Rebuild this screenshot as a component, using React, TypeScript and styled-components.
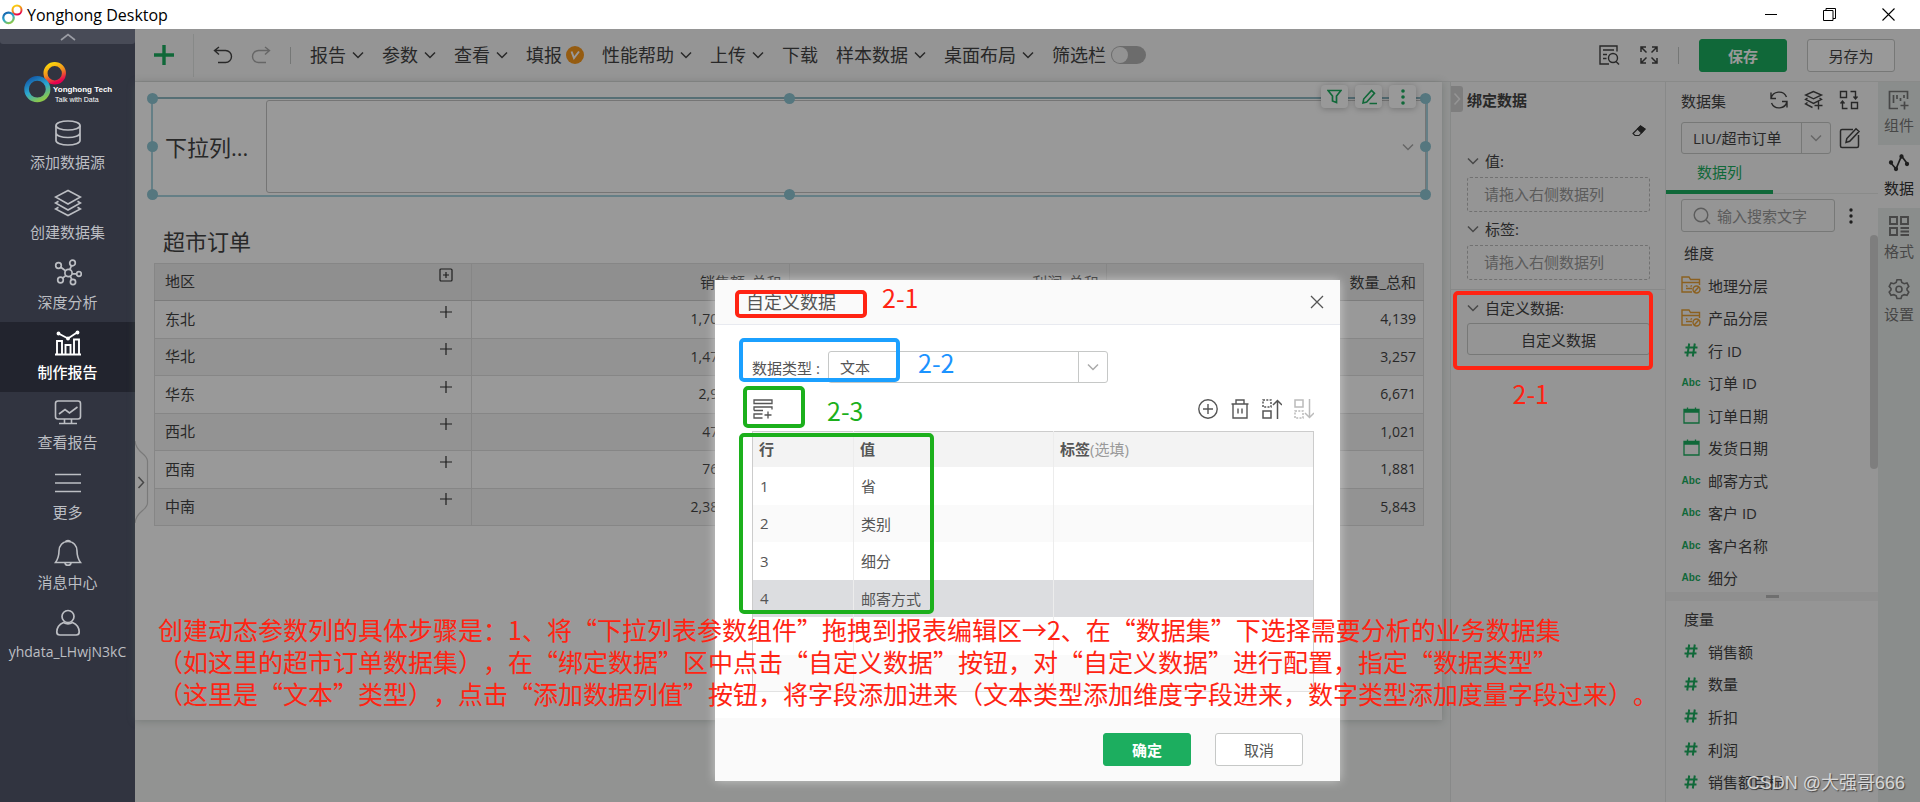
import React from "react";
import styled, { createGlobalStyle, css } from "styled-components";

const GlobalStyle = createGlobalStyle`
  * { box-sizing: border-box; }
  html, body, #root { height: 100%; }
  body {
    margin: 0;
    overflow: hidden;
    font-family: "Open Sans", "Noto Sans CJK SC", sans-serif;
    font-size: 15px;
    color: #444;
    background: #f4f6f5;
  }
  button, input, select { font: inherit; color: inherit; }
  button { cursor: pointer; padding: 0; }
  ul { list-style: none; margin: 0; padding: 0; }
  svg { display: block; flex: none; }
`;

/* ---------- icons ---------- */

type IconProps = {
  w?: number;
  h?: number;
  box?: string;
  sw?: number;
  color?: string;
  children: React.ReactNode;
};

function Icon({ w = 20, h = 20, box, sw = 1.4, color = "currentColor", children }: IconProps) {
  return (
    <svg
      width={w}
      height={h}
      viewBox={box ?? `0 0 ${w} ${h}`}
      fill="none"
      stroke={color}
      strokeWidth={sw}
      aria-hidden="true"
    >
      {children}
    </svg>
  );
}

const Chevron = ({ color, sw = 1.5 }: { color?: string; sw?: number }) => (
  <Icon w={12} h={8} sw={sw} color={color}>
    <path d="M1 1.5l5 5 5-5" />
  </Icon>
);

const DatabaseIcon = () => (
  <Icon w={28} h={28} sw={1.7}>
    <ellipse cx="14" cy="6.5" rx="12" ry="4.5" />
    <path d="M2 6.5v15c0 2.500 5.400 4.500 12 4.500s12-2 12-4.500v-15M2 14c0 2.500 5.400 4.500 12 4.500s12-2 12-4.500" />
  </Icon>
);
const LayersIcon = () => (
  <Icon w={28} h={28} sw={1.6}>
    <path d="M14 1.500L1.500 8 14 15l12.500-7zM4.500 12.200L1.500 14 14 21l12.500-7-3-1.800M4.500 18.200L1.500 20 14 26.500 26.500 20l-3-1.800" />
  </Icon>
);
const NetworkIcon = () => (
  <Icon w={28} h={28} sw={1.7}>
    <circle cx="14.500" cy="14" r="3.600" />
    <circle cx="4.500" cy="6.500" r="2.800" />
    <circle cx="18.500" cy="4" r="2.800" />
    <circle cx="25" cy="15" r="2.300" />
    <circle cx="6.500" cy="21" r="2.800" />
    <circle cx="19" cy="23" r="2.600" />
    <path d="M6.800 8.200l4.700 3.500M17.500 6.700l-1.700 3.900M22.600 14.800h-4.500M8.700 19.200l3-2.600M17.900 20.600l-1.700-3.400" />
  </Icon>
);
const ReportIcon = () => (
  <Icon w={28} h={28} sw={1.9}>
    <path d="M1 25.500h26M3 25.500V12h5v13.500M11.500 25.500V16h5v9.500M20 25.500V10.500h5v15M4.500 4.500l9.500 5 9-6" />
    <circle cx="4.500" cy="4.500" r="1" fill="currentColor" />
    <circle cx="14" cy="9.500" r="1" fill="currentColor" />
    <circle cx="23.500" cy="3.500" r="1" fill="currentColor" />
  </Icon>
);
const MonitorIcon = () => (
  <Icon w={28} h={28} sw={1.6}>
    <rect x="1.500" y="2" width="25" height="18" rx="2.500" />
    <path d="M5 15l6-4.500 4.500 3.500 8-6M10.500 20v4M17.500 20v4M5 24.500h18" />
  </Icon>
);
const MenuIcon = () => (
  <Icon w={28} h={28} sw={1.6}>
    <path d="M1 5.500h26M1 14h26M1 22.500h26" />
  </Icon>
);
const BellIcon = () => (
  <Icon w={28} h={28} sw={1.6}>
    <path d="M14 2.500c-5.500 0-9 4-9 9.500 0 6-1 8-3.500 11.500h25C24 20 23 18 23 12c0-5.500-3.500-9.500-9-9.500zM11.500 2.800c.5-1.800 4.500-1.800 5 0M11 24c.5 3 5.500 3 6 0" />
  </Icon>
);
const UserIcon = () => (
  <Icon w={28} h={28} sw={1.7}>
    <circle cx="14" cy="7.500" r="6" />
    <path d="M9.500 13.500C5 15.500 2.800 19 2.800 23c0 2 1 3 3 3h16.400c2 0 3-1 3-3 0-4-2.200-7.500-6.700-9.500-2.500 1.500-6.500 1.500-9 0z" />
  </Icon>
);

function Rings({ size }: { size: number }) {
  const id = `ring${size}`;
  return (
    <svg width={size} height={size} viewBox="0 0 42 42" fill="none" aria-hidden="true">
      <defs>
        <linearGradient id={`${id}a`} x1="0.2" y1="0" x2="0.7" y2="1">
          <stop offset="0" stopColor="#1560ac" />
          <stop offset="0.5" stopColor="#2ba7cf" />
          <stop offset="1" stopColor="#8cc84b" />
        </linearGradient>
        <linearGradient id={`${id}b`} x1="0.2" y1="0" x2="0.6" y2="1">
          <stop offset="0" stopColor="#fbd50c" />
          <stop offset="0.5" stopColor="#f08c1e" />
          <stop offset="1" stopColor="#e5004f" />
        </linearGradient>
      </defs>
      <circle cx="30" cy="12" r="9" stroke={`url(#${id}b)`} strokeWidth="4" />
      <circle cx="13" cy="27.500" r="10.500" stroke={`url(#${id}a)`} strokeWidth="4.500" />
    </svg>
  );
}

/* ---------- page frame ---------- */

const Page = styled.div`
  position: relative;
  display: flex;
  flex-direction: column;
  height: 100vh;
  overflow: hidden;
`;

const TitleBar = styled.header`
  display: flex;
  align-items: center;
  height: 29px;
  flex: none;
  background: #fff;
  color: #000;
`;
const AppName = styled.h1`
  display: flex;
  align-items: center;
  gap: 4px;
  margin: 0;
  padding-left: 2px;
  font-size: 16px;
  line-height: 28px;
  font-weight: 400;
`;
const WindowButtons = styled.div`
  display: flex;
  margin-left: auto;
  padding-right: 2px;
`;
const WindowButton = styled.button`
  display: grid;
  place-items: center;
  width: 59px;
  height: 29px;
  border: 0;
  background: none;
`;

const Body = styled.div`
  display: flex;
  flex: 1;
  min-height: 0;
`;

/* ---------- sidebar ---------- */

const Sidebar = styled.nav`
  display: flex;
  flex-direction: column;
  flex: none;
  width: 135px;
  background: #313440;
  color: #bcbec3;
`;
const SidebarCollapse = styled.button`
  display: grid;
  place-items: center;
  height: 15px;
  border: 0;
  border-radius: 0 0 3px 3px;
  background: #484b57;
  color: #9b9da5;
`;
const Brand = styled.div`
  display: flex;
  align-items: flex-end;
  height: 68px;
  padding: 0 0 8px 24px;
  color: #fff;
`;
const BrandText = styled.div`
  margin-left: -14px;
  font-family: "Liberation Sans", sans-serif;
  white-space: nowrap;
  strong { display: block; font-size: 8px; line-height: 10px; }
  span { display: block; padding-left: 2px; font-size: 7px; line-height: 9px; }
`;
const NavItem = styled.a<{ $active?: boolean; $user?: boolean }>`
  display: flex;
  flex-direction: column;
  align-items: center;
  gap: 4px;
  height: 70px;
  padding-top: 7px;
  color: ${(p) => (p.$active ? "#fff" : "inherit")};
  background: ${(p) => (p.$active ? "#22242e" : "none")};
  font-size: ${(p) => (p.$user ? 14 : 15)}px;
  font-weight: ${(p) => (p.$active ? 500 : 400)};
  line-height: 22px;
  text-decoration: none;
`;

const Main = styled.main`
  position: relative;
  display: flex;
  flex-direction: column;
  flex: 1;
  min-width: 0;
`;

/* ---------- toolbar ---------- */

const Toolbar = styled.div`
  display: flex;
  align-items: center;
  flex: none;
  height: 53px;
  padding-right: 25px;
  border-bottom: 1px solid #e4e6e5;
  background: #f8f8f8;
`;
const AddButton = styled.button`
  display: grid;
  place-items: center;
  width: 59px;
  height: 43px;
  border: 0;
  border-right: 1px solid #e2e4e3;
  background: none;
`;
const IconButton = styled.button<{ $color?: string }>`
  display: grid;
  place-items: center;
  border: 0;
  background: none;
  color: ${(p) => p.$color ?? "inherit"};
`;
const History = styled.div`
  display: flex;
  gap: 18px;
  margin: 0 19px;
`;
const Rule = styled.span`
  width: 1px;
  height: 17px;
  background: #c4c6c5;
`;
const Menus = styled.div`
  display: flex;
  align-items: center;
  gap: 18px;
  margin-left: 19px;
`;
const MenuButton = styled.button`
  display: flex;
  align-items: center;
  gap: 6px;
  border: 0;
  background: none;
  font-size: 18px;
  line-height: 26px;
  white-space: nowrap;
`;
const VipBadge = styled.span`
  display: grid;
  place-items: center;
  width: 18px;
  height: 18px;
  margin-left: -2px;
  border-radius: 50%;
  background: #f8991d;
`;
const SwitchLabel = styled.label`
  display: flex;
  align-items: center;
  gap: 5px;
  font-size: 18px;
  line-height: 26px;
  white-space: nowrap;
`;
const Switch = styled.input`
  appearance: none;
  width: 35px;
  height: 18px;
  margin: 0;
  padding: 1px;
  border-radius: 9px;
  background: #b4b4b4;
  &::before {
    content: "";
    display: block;
    width: 16px;
    height: 16px;
    border-radius: 50%;
    background: #f6f6f6;
  }
`;
const ToolbarEnd = styled.div`
  display: flex;
  align-items: center;
  gap: 20px;
  margin-left: auto;
`;
const Button = styled.button<{ $primary?: boolean }>`
  width: 88px;
  height: 33px;
  border: 1px solid #c6c8c7;
  border-radius: 3px;
  background: #fff;
  ${(p) =>
    p.$primary &&
    css`
      border-color: #1cae5f;
      background: #1cae5f;
      color: #fff;
      font-weight: 700;
    `}
`;

/* ---------- report canvas ---------- */

const Workspace = styled.div`
  display: flex;
  flex: 1;
  min-height: 0;
`;
const CanvasArea = styled.div`
  position: relative;
  flex: 1;
  min-width: 0;
  padding-right: 8px;
  background: #f3f5f4;
`;
const Sheet = styled.section`
  min-height: 638px;
  padding: 15px 14px 0 16px;
  background: #fff;
  box-shadow: 0 1px 8px rgba(90, 110, 100, 0.3);
`;
const SelectedWidget = styled.div`
  position: relative;
  display: flex;
  align-items: center;
  height: 100px;
  padding: 1px 0 2px 12px;
  border: 2px solid #a9d4df;
  border-top-color: #8fb9c4;
`;
const WidgetLabel = styled.label`
  width: 101px;
  font-size: 22px;
  line-height: 30px;
`;
const WidgetBox = styled.div`
  display: flex;
  align-items: center;
  flex: 1;
  height: 93px;
  padding-right: 11px;
  border: 1px solid #c4c4c4;
  border-radius: 3px;
  color: #aaa;
`;
const BareSelect = styled.select`
  appearance: none;
  flex: 1;
  min-width: 0;
  height: 100%;
  padding: 0 0 1px 11px;
  border: 0;
  background: none;
  outline: 0;
`;
const Handle = styled.i<{ $x: number; $y: number }>`
  position: absolute;
  left: ${(p) => p.$x}%;
  top: ${(p) => p.$y}%;
  width: 11px;
  height: 11px;
  margin: -6px;
  border-radius: 50%;
  background: #8ec6d4;
`;
const WidgetActions = styled.div`
  position: absolute;
  right: 10px;
  top: -14px;
  display: flex;
  gap: 7px;
`;
const WidgetAction = styled.button`
  display: grid;
  place-items: center;
  width: 27px;
  height: 23px;
  border: 0;
  border-radius: 4px;
  background: #fff;
  color: #1cae5f;
  box-shadow: 0 1px 6px rgba(0, 0, 0, 0.25);
`;
const ReportTitle = styled.h2`
  margin: 28px 0 6px 12px;
  font-size: 22px;
  line-height: 32px;
  font-weight: 400;
`;
const ReportTable = styled.table`
  width: calc(100% - 7px);
  margin-left: 3px;
  border-collapse: collapse;
  table-layout: fixed;
  th, td {
    height: 37px;
    padding: 0 7px 2px 10px;
    border: 1px solid #e0e0e0;
    font-weight: 400;
    text-align: right;
  }
  td { font-size: 14px; }
  th { border-bottom-color: #cfcfcf; background: #efefef; }
  th:first-child { text-align: left; }
  tbody th { border-bottom-color: #e0e0e0; background: none; }
  tbody tr:nth-child(odd) { height: 38px; }
  tbody tr:nth-child(even) { background: #f5f5f5; }
`;
const RegionCell = styled.div<{ $head?: boolean }>`
  display: flex;
  justify-content: space-between;
  padding-right: 11px;
  line-height: 24px;
  svg { margin-top: ${(p) => (p.$head ? "-1px" : "-2px")}; }
`;
const DrawerHandle = styled.button`
  position: absolute;
  left: 0;
  top: 358px;
  border: 0;
  background: none;
  color: #777;
`;

/* ---------- binding panel ---------- */

const BindPanel = styled.aside`
  flex: none;
  width: 215px;
  border-left: 1px solid #e3e5e4;
  background: #f8f8f8;
`;
const BindHead = styled.div`
  display: flex;
  align-items: center;
  gap: 4px;
  padding-top: 4px;
  font-weight: 700;
`;
const CollapseTab = styled.button`
  display: grid;
  place-items: center;
  width: 12px;
  height: 26px;
  border: 0;
  border-radius: 0 3px 3px 0;
  background: #d2d2d2;
  color: #f8f8f8;
`;
const EraserRow = styled.div`
  display: flex;
  justify-content: flex-end;
  align-items: flex-start;
  height: 35px;
  padding: 13px 19px 0 0;
`;
const BindSection = styled.section`
  padding: 0 15px 0 16px;
`;
const SectionTitle = styled.h3`
  display: flex;
  align-items: center;
  gap: 6px;
  height: 27px;
  margin: 0;
  font-size: 15px;
  font-weight: 400;
  svg { color: #777; }
`;
const DropZone = styled.div`
  height: 35px;
  margin: 3px 0;
  padding-left: 16px;
  border: 1px dashed #bcbcbc;
  border-radius: 3px;
  color: #999;
  line-height: 32px;
`;
const CustomSection = styled(BindSection)`
  margin-top: 9px;
  padding-top: 4px;
  border-top: 1px solid #e3e5e4;
`;
const CustomButton = styled(Button)`
  width: 100%;
  height: 32px;
  margin-top: 2px;
  background: none;
`;

/* ---------- dataset panel ---------- */

const DataPanel = styled.aside`
  display: flex;
  flex-direction: column;
  flex: none;
  width: 213px;
  border-left: 1px solid #e3e5e4;
  background: #f8f8f8;
`;
const DataHead = styled.div`
  display: flex;
  align-items: center;
  justify-content: space-between;
  height: 36px;
  padding: 0 19px 0 15px;
`;
const HeadIcons = styled.div`
  display: flex;
  gap: 15px;
`;
const PickRow = styled.div`
  display: flex;
  align-items: center;
  gap: 8px;
  margin-top: 4px;
  padding-left: 15px;
`;
const SelectBox = styled.div<{ $w: number; $arrow: number }>`
  display: flex;
  align-items: stretch;
  width: ${(p) => p.$w}px;
  height: 32px;
  border: 1px solid #c6c8c7;
  border-radius: 3px;
  span {
    display: grid;
    place-items: center;
    width: ${(p) => p.$arrow}px;
    border-left: 1px solid #c6c8c7;
    color: #aaa;
  }
`;
const TabBar = styled.div`
  height: 40px;
  border-bottom: 1px solid #e6e8e7;
`;
const Tab = styled.button`
  width: 107px;
  height: 40px;
  padding: 0 0 1px;
  border: 0;
  border-bottom: 4px solid #1cae5f;
  background: none;
  color: #1cae5f;
`;
const SearchBox = styled.div`
  display: flex;
  align-items: center;
  gap: 6px;
  width: 154px;
  height: 33px;
  padding-left: 11px;
  border: 1px solid #c6c8c7;
  border-radius: 3px;
  color: #999;
  input {
    min-width: 0;
    width: 100%;
    padding: 0;
    border: 0;
    background: none;
    outline: 0;
  }
  input::placeholder { color: #999; }
`;
const SearchRow = styled(PickRow)`
  margin-top: 5px;
  gap: 14px;
`;
const FieldScroll = styled.div`
  position: relative;
  flex: none;
  height: 360px;
  padding-left: 15px;
  &::after {
    content: "";
    position: absolute;
    right: 0;
    top: 3px;
    width: 8px;
    height: 234px;
    border-radius: 4px;
    background: #d3d3d3;
  }
`;
const GroupName = styled.h3<{ $top: number }>`
  margin: 0;
  padding: ${(p) => p.$top}px 0 0 3px;
  font-size: 15px;
  line-height: 22px;
  font-weight: 400;
`;
const FieldList = styled.ul<{ $h: number }>`
  display: grid;
  grid-auto-rows: 1fr;
  height: ${(p) => p.$h}px;
  margin-top: 5px;
`;
const Field = styled.li`
  display: flex;
  align-items: center;
  gap: 7px;
  white-space: nowrap;
`;
const FieldMark = styled.span`
  display: grid;
  place-items: center;
  width: 20px;
  color: #1cae5f;
  font-family: "Liberation Sans", sans-serif;
  font-weight: 700;
  font-size: 10px;
`;
const Splitter = styled.div`
  display: grid;
  place-items: center;
  flex: none;
  height: 9px;
  background: #efefef;
  &::before {
    content: "";
    width: 13px;
    height: 3px;
    background: #b9b9b9;
  }
`;
const Measures = styled.div`
  flex: 1;
  min-height: 0;
  padding-left: 15px;
  overflow: hidden;
`;

/* ---------- right rail ---------- */

const Rail = styled.nav`
  flex: none;
  width: 42px;
  background: #e7ecea;
`;
const RailItem = styled.button<{ $active?: boolean }>`
  display: flex;
  flex-direction: column;
  align-items: center;
  gap: 2px;
  width: 100%;
  height: 63px;
  padding-top: 7px;
  border: 0;
  background: ${(p) => (p.$active ? "#f8f8f8" : "none")};
  color: ${(p) => (p.$active ? "#333" : "#777")};
  line-height: 24px;
`;

/* ---------- dialog ---------- */

const Overlay = styled.div`
  position: absolute;
  inset: 0;
  display: flex;
  justify-content: center;
  align-items: flex-start;
  padding-top: 251px;
  background: rgba(0, 0, 0, 0.4);
`;
const Dialog = styled.form`
  position: relative;
  width: 625px;
  background: #fff;
  box-shadow: 0 0 10px rgba(255, 255, 255, 0.5);
  color: #555;
`;
const DialogHead = styled.div`
  display: flex;
  align-items: center;
  justify-content: space-between;
  height: 45px;
  padding: 0 16px 0 31px;
  border-bottom: 1px solid #e8eaf0;
  background: #fafafa;
  h2 { margin: 0; font-size: 18px; font-weight: 400; line-height: 26px; }
`;
const DialogBody = styled.div`
  padding: 26px 26px 26px 37px;
`;
const TypeRow = styled.div`
  display: flex;
  align-items: center;
  gap: 8px;
  label { width: 68px; white-space: nowrap; }
`;
const ToolRow = styled.div`
  display: flex;
  align-items: center;
  gap: 12px;
  height: 48px;
  padding: 4px 0 0 1px;
  button:first-child { margin-right: auto; }
`;
const ValueTable = styled.table`
  width: 100%;
  border-collapse: collapse;
  table-layout: fixed;
  border: 1px solid #ccc;
  border-bottom-color: #e2e2e2;
  th, td {
    height: 37px;
    padding: 0 7px;
    border-right: 1px solid #ececec;
    text-align: left;
  }
  th { height: 35px; padding: 0 6px 2px; background: #f3f3f3; }
  th span { color: #999; font-weight: 400; }
  td:last-child, th:last-child { border-right-color: #ccc; }
  tbody tr:nth-child(odd) { height: 38px; }
  tbody tr:nth-child(even) { background: #fafafa; }
  tbody tr[aria-selected="true"] { background: #dcdde0; }
`;
const IndexCol = styled.col`
  width: 101px;
`;
const ValueCol = styled.col`
  width: 200px;
`;
const DialogFoot = styled.div`
  display: flex;
  justify-content: flex-end;
  gap: 24px;
  padding: 15px 37px;
  background: #fafafa;
`;

/* ---------- annotations ---------- */

const Mark = styled.div<{ $x: number; $y: number; $w: number; $h: number; $color: string; $right?: boolean }>`
  position: absolute;
  ${(p) => (p.$right ? "right" : "left")}: ${(p) => p.$x}px;
  top: ${(p) => p.$y}px;
  width: ${(p) => p.$w}px;
  height: ${(p) => p.$h}px;
  border: 4px solid ${(p) => p.$color};
  border-radius: 5px;
  pointer-events: none;
`;
const MarkText = styled.span<{ $x: number; $y: number; $color: string; $right?: boolean }>`
  position: absolute;
  ${(p) => (p.$right ? "right" : "left")}: ${(p) => p.$x}px;
  top: ${(p) => p.$y}px;
  color: ${(p) => p.$color};
  font-family: "Noto Sans CJK SC", sans-serif;
  font-size: 25px;
  line-height: 32px;
  pointer-events: none;
`;
const Steps = styled.p`
  position: absolute;
  left: 158px;
  top: 613px;
  margin: 0;
  color: #ff2413;
  font-family: "Noto Sans CJK SC", sans-serif;
  font-size: 25px;
  line-height: 32px;
  white-space: nowrap;
  text-spacing-trim: space-all;
`;
const Watermark = styled.span`
  position: absolute;
  right: 15px;
  bottom: 6px;
  color: rgba(235, 235, 235, 0.85);
  font-family: "Liberation Sans", "Noto Sans CJK SC", sans-serif;
  font-size: 18px;
  line-height: 26px;
  text-shadow: 1px 1px 1px #444;
`;

/* ---------- data ---------- */

const NAV = [
  { label: "添加数据源", icon: <DatabaseIcon /> },
  { label: "创建数据集", icon: <LayersIcon /> },
  { label: "深度分析", icon: <NetworkIcon /> },
  { label: "制作报告", icon: <ReportIcon />, active: true },
  { label: "查看报告", icon: <MonitorIcon /> },
  { label: "更多", icon: <MenuIcon /> },
  { label: "消息中心", icon: <BellIcon /> },
  { label: "yhdata_LHwjN3kC", icon: <UserIcon />, user: true },
];

const ROWS = [
  ["东北", "1,702,561.454", "242,191.51", "4,139"],
  ["华北", "1,470,303.812", "430,807.46", "3,257"],
  ["华东", "2,944,409.31", "607,218.96", "6,671"],
  ["西北", "471,285.963", "98,253.38", "1,021"],
  ["西南", "761,302.461", "97,636.67", "1,881"],
  ["中南", "2,388,413.132", "670,885.31", "5,843"],
];

type Kind = "folder" | "num" | "abc" | "date";
const DIMENSIONS: [Kind, string][] = [
  ["folder", "地理分层"],
  ["folder", "产品分层"],
  ["num", "行 ID"],
  ["abc", "订单 ID"],
  ["date", "订单日期"],
  ["date", "发货日期"],
  ["abc", "邮寄方式"],
  ["abc", "客户 ID"],
  ["abc", "客户名称"],
  ["abc", "细分"],
];
const MEASURES = ["销售额", "数量", "折扣", "利润", "销售额目标"];

function KindMark({ kind }: { kind: Kind }) {
  if (kind === "abc") return <FieldMark>Abc</FieldMark>;
  if (kind === "num")
    return (
      <FieldMark>
        <Icon w={14} h={14} sw={2}>
          <path d="M5.200 .5L3.200 13.500M10.800 .5L8.800 13.500M1.500 4.500H13.500M.5 9.500H12.500" />
        </Icon>
      </FieldMark>
    );
  if (kind === "date")
    return (
      <FieldMark>
        <Icon w={17} h={17} sw={1.3}>
          <path d="M1 2.500v13.500h15V2.500z" />
          <path d="M1 4h15" strokeWidth="3.500" />
          <path d="M4.500 .5v2M12.500 .5v2" />
        </Icon>
      </FieldMark>
    );
  return (
    <FieldMark>
      <Icon w={20} h={18} sw={1.4} color="#e8a136">
        <path d="M18.500 9V3.500H9.500L8 1H1v15h10M1 6.500h17.500M5 9.500l1.500 1M11 9.500l-1.500 1M5 12.500h6" />
        <circle cx="15.500" cy="13.500" r="3.500" />
        <path d="M13.200 16l4.600-5" />
      </Icon>
    </FieldMark>
  );
}

const PlusGlyph = () => (
  <Icon w={14} h={14} sw={1.2} color="#333">
    <path d="M7 1v12M1 7h12" />
  </Icon>
);

export default function App() {
  return (
    <Page lang="zh-CN">
      <GlobalStyle />
      <TitleBar>
        <AppName>
          <Rings size={21} />
          Yonghong Desktop
        </AppName>
        <WindowButtons>
          <WindowButton aria-label="最小化">
            <Icon w={13} h={13} sw={1} color="#000"><path d="M1 6.500h12" /></Icon>
          </WindowButton>
          <WindowButton aria-label="还原">
            <Icon w={13} h={13} sw={1} color="#000"><path d="M.5 2.500h9.500v10H.5zM3 2.500v-2h9.500v10h-2.500" /></Icon>
          </WindowButton>
          <WindowButton aria-label="关闭">
            <Icon w={13} h={13} sw={1.1} color="#000"><path d="M.5 .5l12 12M12.500 .5l-12 12" /></Icon>
          </WindowButton>
        </WindowButtons>
      </TitleBar>

      <Body>
        <Sidebar>
          <SidebarCollapse aria-label="收起">
            <Icon w={16} h={8} sw={1.6}><path d="M1 7l7-5.500L15 7" /></Icon>
          </SidebarCollapse>
          <Brand>
            <Rings size={43} />
            <BrandText>
              <strong>Yonghong Tech</strong>
              <span>Talk with Data</span>
            </BrandText>
          </Brand>
          {NAV.map((n) => (
            <NavItem key={n.label} href="#" $active={n.active} $user={n.user}>
              {n.icon}
              {n.label}
            </NavItem>
          ))}
        </Sidebar>

        <Main>
          <Toolbar>
            <AddButton aria-label="新建">
              <Icon w={20} h={20} sw={3.4} color="#1cae5f"><path d="M10 0v20M0 10h20" /></Icon>
            </AddButton>
            <History>
              <IconButton aria-label="撤销">
                <Icon w={20} h={18}><path d="M6 1L1.500 4.500 6 8.500M2 4.500h10.500a6 6 0 010 12H5" /></Icon>
              </IconButton>
              <IconButton aria-label="重做" $color="#aaa">
                <Icon w={20} h={18}><path d="M14 1l4.500 3.500L14 8.500M18 4.500H7.500a6 6 0 000 12H15" /></Icon>
              </IconButton>
            </History>
            <Rule />
            <Menus>
              <MenuButton>报告<Chevron /></MenuButton>
              <MenuButton>参数<Chevron /></MenuButton>
              <MenuButton>查看<Chevron /></MenuButton>
              <MenuButton>
                填报
                <VipBadge>
                  <Icon w={10} h={10} sw={2} color="#fff"><path d="M1.500 1.500L4 8l5-6.500" /></Icon>
                </VipBadge>
              </MenuButton>
              <MenuButton>性能帮助<Chevron /></MenuButton>
              <MenuButton>上传<Chevron /></MenuButton>
              <MenuButton>下载</MenuButton>
              <MenuButton>样本数据<Chevron /></MenuButton>
              <MenuButton>桌面布局<Chevron /></MenuButton>
              <SwitchLabel>
                筛选栏
                <Switch type="checkbox" role="switch" />
              </SwitchLabel>
            </Menus>
            <ToolbarEnd>
              <IconButton aria-label="预览">
                <Icon w={21} h={20} sw={1.4}>
                  <path d="M18 6.500V1H1v18h9M4 5h11M4 9.500h4M4 13.500h3.500" />
                  <circle cx="14" cy="13" r="4.500" />
                  <path d="M17 16.500l3 3" />
                </Icon>
              </IconButton>
              <IconButton aria-label="全屏">
                <Icon w={18} h={18} sw={1.5}>
                  <path d="M1 6V1h5M12 1h5v5M17 12v5h-5M6 17H1v-5M1 1l5.500 5.500M17 1l-5.500 5.500M17 17l-5.500-5.500M1 17l5.500-5.500" />
                </Icon>
              </IconButton>
              <Rule />
              <Button $primary>保存</Button>
              <Button>另存为</Button>
            </ToolbarEnd>
          </Toolbar>

          <Workspace>
            <CanvasArea>
              <Sheet>
                <SelectedWidget>
                  <WidgetLabel htmlFor="param">下拉列...</WidgetLabel>
                  <WidgetBox>
                    <BareSelect id="param" />
                    <Chevron />
                  </WidgetBox>
                  {[[0, 0], [50, 0], [100, 0], [0, 50], [100, 50], [0, 100], [50, 100], [100, 100]].map(([x, y]) => (
                    <Handle key={`${x}-${y}`} $x={x} $y={y} />
                  ))}
                  <WidgetActions>
                    <WidgetAction aria-label="筛选">
                      <Icon w={15} h={15} sw={1.7}><path d="M1 1.500h13L9.500 7v6.500L5.500 12V7z" /></Icon>
                    </WidgetAction>
                    <WidgetAction aria-label="编辑">
                      <Icon w={16} h={16} sw={1.6}><path d="M2 14l.7-4L10.500 1.500l3 2.800L5.700 13zM8.500 14.500H16" /></Icon>
                    </WidgetAction>
                    <WidgetAction aria-label="更多">
                      <Icon w={4} h={16} sw={0}>
                        <g fill="currentColor"><circle cx="2" cy="2" r="1.800" /><circle cx="2" cy="8" r="1.800" /><circle cx="2" cy="14" r="1.800" /></g>
                      </Icon>
                    </WidgetAction>
                  </WidgetActions>
                </SelectedWidget>
                <ReportTitle>超市订单</ReportTitle>
                <ReportTable>
                  <thead>
                    <tr>
                      <th scope="col">
                        <RegionCell $head>
                          地区
                          <Icon w={14} h={14} sw={1.2} color="#333">
                            <rect x="1" y="1" width="12" height="12" rx="1" />
                            <path d="M7 4v6M4 7h6" />
                          </Icon>
                        </RegionCell>
                      </th>
                      <th scope="col">销售额_总和</th>
                      <th scope="col">利润_总和</th>
                      <th scope="col">数量_总和</th>
                    </tr>
                  </thead>
                  <tbody>
                    {ROWS.map(([region, ...values]) => (
                      <tr key={region}>
                        <th scope="row">
                          <RegionCell>
                            {region}
                            <PlusGlyph />
                          </RegionCell>
                        </th>
                        {values.map((v) => <td key={v}>{v}</td>)}
                      </tr>
                    ))}
                  </tbody>
                </ReportTable>
              </Sheet>
              <DrawerHandle aria-label="展开">
                <Icon w={14} h={84} sw={1.2}>
                  <path d="M0 1c1 12 12 12 12.500 20v42C12 71 1 71 0 83" fill="#fff" stroke="#ccc" />
                  <path d="M3.500 37l5 5.500-5 5.500" strokeWidth="1.500" />
                </Icon>
              </DrawerHandle>
            </CanvasArea>

            <BindPanel>
              <BindHead>
                <CollapseTab aria-label="收起面板">
                  <Icon w={8} h={14} sw={1.6}><path d="M1.500 1.500L6.500 7l-5 5.500" /></Icon>
                </CollapseTab>
                绑定数据
              </BindHead>
              <EraserRow>
                <IconButton aria-label="清除" $color="#333">
                  <Icon w={14} h={12} sw={1.1}>
                    <path d="M1 8.500L8.500 1l4.500 3-6 6.500H3z" />
                    <path d="M5.500 4L8.500 1l4.500 3-3.500 4z" fill="currentColor" />
                  </Icon>
                </IconButton>
              </EraserRow>
              <BindSection>
                <SectionTitle><Chevron />值:</SectionTitle>
                <DropZone>请拖入右侧数据列</DropZone>
                <SectionTitle><Chevron />标签:</SectionTitle>
                <DropZone>请拖入右侧数据列</DropZone>
              </BindSection>
              <CustomSection>
                <SectionTitle><Chevron />自定义数据:</SectionTitle>
                <CustomButton>自定义数据</CustomButton>
              </CustomSection>
            </BindPanel>

            <DataPanel>
              <DataHead>
                数据集
                <HeadIcons>
                  <IconButton aria-label="刷新">
                    <Icon w={20} h={20}>
                      <path d="M2 8.500a8.200 8.200 0 0115.500-1.500M18 11.500a8.200 8.200 0 01-15.500 1.500M2 2.500v6h5M18 17.500v-6h-5" />
                    </Icon>
                  </IconButton>
                  <IconButton aria-label="新建数据集">
                    <Icon w={20} h={20}>
                      <path d="M9.500 1.500L1.500 5l8 3.800 8-3.800zM3.500 8L1.500 9.500l8 4 8-4-2-1.500M3.500 12.500l-2 1.500 7 3.500M14.500 11.500v8M10.500 15.500h8" />
                    </Icon>
                  </IconButton>
                  <IconButton aria-label="替换数据集">
                    <Icon w={20} h={20}>
                      <path d="M1.500 1.500h6v6h-6zM12.500 12.500h6v6h-6zM11.500 1.500h5v7M14.500 6.500l2 2.500 2-2.500M8.500 18.500h-5v-7M1.500 13.500l2-2.500 2 2.500" />
                    </Icon>
                  </IconButton>
                </HeadIcons>
              </DataHead>
              <PickRow>
                <SelectBox $w={150} $arrow={29}>
                  <BareSelect aria-label="数据集" defaultValue="a">
                    <option value="a">LIU/超市订单</option>
                  </BareSelect>
                  <span><Chevron /></span>
                </SelectBox>
                <IconButton aria-label="编辑数据集">
                  <Icon w={22} h={22} sw={1.5}>
                    <path d="M14 2.500H3a1.500 1.500 0 00-1.500 1.500v15A1.500 1.500 0 003 20.500h15a1.500 1.500 0 001.500-1.500V8M7 15.500l.8-4L17 1.800l3 2.700-9.300 9.800z" />
                  </Icon>
                </IconButton>
              </PickRow>
              <TabBar>
                <Tab>数据列</Tab>
              </TabBar>
              <SearchRow>
                <SearchBox>
                  <Icon w={18} h={18}><circle cx="8" cy="8" r="6.800" /><path d="M13 13l4 4" /></Icon>
                  <input aria-label="搜索" placeholder="输入搜索文字" />
                </SearchBox>
                <IconButton aria-label="更多选项" $color="#333">
                  <Icon w={4} h={16} sw={0}>
                    <g fill="currentColor"><circle cx="2" cy="2" r="1.700" /><circle cx="2" cy="8" r="1.700" /><circle cx="2" cy="14" r="1.700" /></g>
                  </Icon>
                </IconButton>
              </SearchRow>
              <FieldScroll>
                <GroupName $top={10}>维度</GroupName>
                <FieldList $h={325}>
                  {DIMENSIONS.map(([kind, name]) => (
                    <Field key={name}><KindMark kind={kind} />{name}</Field>
                  ))}
                </FieldList>
              </FieldScroll>
              <Splitter />
              <Measures>
                <GroupName $top={7}>度量</GroupName>
                <FieldList $h={163}>
                  {MEASURES.map((name) => (
                    <Field key={name}><KindMark kind="num" />{name}</Field>
                  ))}
                </FieldList>
              </Measures>
            </DataPanel>

            <Rail>
              <RailItem>
                <Icon w={22} h={22} sw={1.7}>
                  <path d="M19.500 10V2.500h-18v17H10M5.500 6v8M9 6v4M12.500 9v3M16 6v3M16.500 12.500v8M12.500 16.500h8" />
                </Icon>
                组件
              </RailItem>
              <RailItem $active>
                <Icon w={22} h={22} sw={1.7}>
                  <path d="M3 11l5 6 5.500-13 6 8" />
                  <g fill="currentColor"><circle cx="3" cy="10.500" r="1.300" /><circle cx="8" cy="17" r="1.300" /><circle cx="13.500" cy="4.500" r="1.300" /><circle cx="19" cy="12" r="1.300" /></g>
                </Icon>
                数据
              </RailItem>
              <RailItem>
                <Icon w={22} h={22} sw={1.9}>
                  <path d="M2 2h7v7H2zM13 2h7v7h-7zM2 13h7v7H2zM12.500 13h8.500M12.500 16.500h8.500M12.500 20h8.500" />
                </Icon>
                格式
              </RailItem>
              <RailItem>
                <Icon w={22} h={22} sw={1.6}>
                  <path d="M9 1.800h4l.8 2.700 2.400 1.200 2.800-.7 1.800 3.300L19 10.500v1.500l1.800 2-1.800 3.300-2.800-.6-2.400 1.200-.8 2.600H9l-.8-2.600-2.400-1.200-2.800.6-1.800-3.300L3 12v-1.500L1.200 8.300 3 5l2.800.7 2.400-1.200z" />
                  <circle cx="11" cy="11.200" r="3" />
                </Icon>
                设置
              </RailItem>
            </Rail>
          </Workspace>

          <Overlay>
            <Dialog role="dialog" aria-labelledby="dialog-title" onSubmit={(e) => e.preventDefault()}>
              <DialogHead>
                <h2 id="dialog-title">自定义数据</h2>
                <IconButton type="button" aria-label="关闭">
                  <Icon w={14} h={14} sw={1.3}><path d="M1 1l12 12M13 1L1 13" /></Icon>
                </IconButton>
              </DialogHead>
              <DialogBody>
                <TypeRow>
                  <label htmlFor="type">数据类型 :</label>
                  <SelectBox $w={280} $arrow={29}>
                    <BareSelect id="type" defaultValue="t">
                      <option value="t">文本</option>
                    </BareSelect>
                    <span><Chevron /></span>
                  </SelectBox>
                </TypeRow>
                <ToolRow>
                  <IconButton type="button" aria-label="添加数据列值">
                    <Icon w={20} h={20} sw={1.3}>
                      <path d="M1 1h18v3.500H1zM1 11.500V8h18v2.500M1 11.500h9M9.500 15H1v4h8.500M15 12.500v7M11.500 16h7" />
                    </Icon>
                  </IconButton>
                  <IconButton type="button" aria-label="添加">
                    <Icon w={20} h={20} sw={1.4}><circle cx="10" cy="10" r="9.200" /><path d="M10 5v10M5 10h10" /></Icon>
                  </IconButton>
                  <IconButton type="button" aria-label="删除">
                    <Icon w={20} h={20} sw={1.4}><path d="M1.500 5h17M3 5v14h14V5M6 5V1h8v4M8 9.500v5M12 9.500v5" /></Icon>
                  </IconButton>
                  <IconButton type="button" aria-label="上移">
                    <Icon w={20} h={20} sw={1.5}>
                      <path d="M1 1h8v7H1z" strokeDasharray="2 1.300" />
                      <path d="M1 12h8v7H1zM15.500 20V1.500M11 6l4.500-4.500L20 6" />
                    </Icon>
                  </IconButton>
                  <IconButton type="button" aria-label="下移" $color="#bbb">
                    <Icon w={20} h={20} sw={1.5}>
                      <path d="M1 12h8v7H1z" strokeDasharray="2 1.300" />
                      <path d="M1 1h8v7H1zM15.500 0v18.500M11 14l4.500 4.500L20 14" />
                    </Icon>
                  </IconButton>
                </ToolRow>
                <ValueTable>
                  <colgroup>
                    <IndexCol />
                    <ValueCol />
                    <col />
                  </colgroup>
                  <thead>
                    <tr>
                      <th scope="col">行</th>
                      <th scope="col">值</th>
                      <th scope="col">标签<span>(选填)</span></th>
                    </tr>
                  </thead>
                  <tbody>
                    {["省", "类别", "细分", "邮寄方式", "", ""].map((v, i) => (
                      <tr key={i} aria-selected={i === 3}>
                        <td>{v && i + 1}</td>
                        <td>{v}</td>
                        <td />
                      </tr>
                    ))}
                  </tbody>
                </ValueTable>
              </DialogBody>
              <DialogFoot>
                <Button $primary type="submit">确定</Button>
                <Button type="button">取消</Button>
              </DialogFoot>

              <Mark $x={20} $y={10} $w={132} $h={28} $color="#ff2413" />
              <MarkText $x={167} $y={1} $color="#ff2413">2-1</MarkText>
              <Mark $x={24} $y={58} $w={161} $h={44} $color="#1ba0ff" />
              <MarkText $x={203} $y={66} $color="#1b93ff">2-2</MarkText>
              <Mark $x={28} $y={106} $w={62} $h={42} $color="#1cb01c" />
              <MarkText $x={112} $y={114} $color="#1cb01c">2-3</MarkText>
              <Mark $x={24} $y={153} $w={195} $h={181} $color="#1cb01c" />
            </Dialog>
          </Overlay>
        </Main>
      </Body>

      <Mark $right $x={267} $y={291} $w={200} $h={79} $color="#ff2413" />
      <MarkText $right $x={371} $y={377} $color="#ff2413">2-1</MarkText>
      <Steps>
        创建动态参数列的具体步骤是：1、将“下拉列表参数组件”拖拽到报表编辑区→2、在“数据集”下选择需要分析的业务数据集
        <br />
        （如这里的超市订单数据集），在“绑定数据”区中点击“自定义数据”按钮，对“自定义数据”进行配置，指定“数据类型”
        <br />
        （这里是“文本”类型），点击“添加数据列值”按钮，将字段添加进来（文本类型添加维度字段进来，数字类型添加度量字段过来）。
      </Steps>
      <Watermark>CSDN @大强哥666</Watermark>
    </Page>
  );
}
